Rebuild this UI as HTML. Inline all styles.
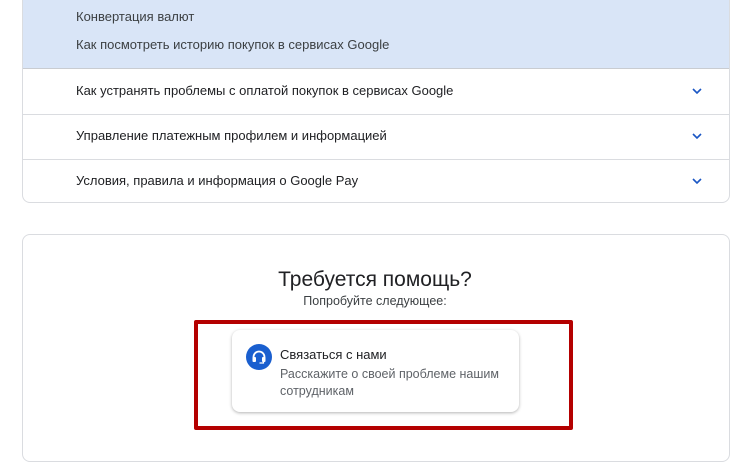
<!DOCTYPE html>
<html><head><meta charset="utf-8"><style>
*{margin:0;padding:0;box-sizing:border-box}
body{width:750px;height:471px;background:#fff;font-family:"Liberation Sans",sans-serif;position:relative;overflow:hidden;color:#202124}
.c1{position:absolute;left:22px;top:-10px;width:708px;height:213px;border:1px solid #dadce0;border-radius:0 0 8px 8px;overflow:hidden}
.blue{position:absolute;left:0;top:0;width:100%;height:78px;background:#d9e5f7;border-bottom:1px solid #c9ccd1}
.t{position:absolute;left:53px;font-size:13px;color:#3c4043}
.row{position:absolute;left:0;width:100%;border-top:1px solid #dadce0}
.rt{position:absolute;left:53px;font-size:13px;color:#202124}
.chev{position:absolute;left:669px;width:10px;height:6px}
.c2{position:absolute;left:22px;top:234px;width:708px;height:228px;border:1px solid #dadce0;border-radius:8px}
.red{position:absolute;left:194px;top:320px;width:379px;height:110px;border:4px solid #b40000;border-radius:2px}
.card{position:absolute;left:232px;top:330px;width:287px;height:82px;border-radius:8px;box-shadow:0 1px 3px rgba(0,0,0,.3);background:#fff}
</style></head><body>
<div class="c1">
 <div class="blue"></div>
 <div class="t" style="top:18px">Конвертация валют</div>
 <div class="t" style="top:46px">Как посмотреть историю покупок в сервисах Google</div>
 <div class="row" style="top:123px"></div>
 <div class="row" style="top:168px"></div>
 <div class="rt" style="top:92px">Как устранять проблемы с оплатой покупок в сервисах Google</div>
 <div class="rt" style="top:137px">Управление платежным профилем и информацией</div>
 <div class="rt" style="top:182px">Условия, правила и информация о Google Pay</div>
 <svg class="chev" style="top:97px" viewBox="0 0 10 6"><path d="M1 1l4 4 4-4" stroke="#1a56c4" stroke-width="1.6" fill="none"/></svg>
 <svg class="chev" style="top:142px" viewBox="0 0 10 6"><path d="M1 1l4 4 4-4" stroke="#1a56c4" stroke-width="1.6" fill="none"/></svg>
 <svg class="chev" style="top:187px" viewBox="0 0 10 6"><path d="M1 1l4 4 4-4" stroke="#1a56c4" stroke-width="1.6" fill="none"/></svg>
</div>
<div class="c2"></div>
<div style="position:absolute;left:0;width:750px;top:268px;text-align:center;font-size:21px;color:#202124">Требуется помощь?</div>
<div style="position:absolute;left:0;width:750px;top:294px;text-align:center;font-size:12.5px;color:#3c4043">Попробуйте следующее:</div>
<div class="red"></div>
<div class="card">
 <svg style="position:absolute;left:14px;top:14px" width="26" height="26" viewBox="0 0 26 26"><circle cx="13" cy="13" r="13" fill="#1a5fcf"/><path d="M7.5 16v-3a5.5 5.5 0 0 1 11 0v3" stroke="#fff" stroke-width="1.8" fill="none"/><rect x="6.5" y="13" width="3.5" height="5" rx="1" fill="#fff"/><rect x="16" y="13" width="3.5" height="5" rx="1" fill="#fff"/><path d="M17.5 18v1h-4" stroke="#fff" stroke-width="1.2" fill="none"/></svg>
 <div style="position:absolute;left:48px;top:17px;font-size:13px;color:#202124;font-weight:500">Связаться с нами</div>
 <div style="position:absolute;left:48px;top:36px;width:230px;font-size:12.5px;line-height:17px;color:#5f6368">Расскажите о своей проблеме нашим сотрудникам</div>
</div>
</body></html>
